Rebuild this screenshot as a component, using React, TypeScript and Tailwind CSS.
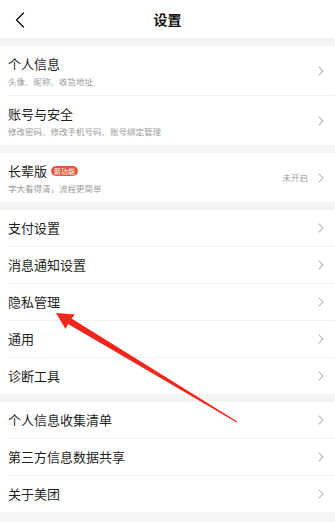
import React from "react";

type Row = { title: string; sub?: string; badge?: string; value?: string };

const groups: Row[][] = [
  [
    { title: "个人信息", sub: "头像、昵称、收货地址" },
    { title: "账号与安全", sub: "修改密码、修改手机号码、账号绑定管理" },
  ],
  [{ title: "长辈版", sub: "字大看得清，流程更简单", badge: "新功能", value: "未开启" }],
  [
    { title: "支付设置" },
    { title: "消息通知设置" },
    { title: "隐私管理" },
    { title: "通用" },
    { title: "诊断工具" },
  ],
  [{ title: "个人信息收集清单" }, { title: "第三方信息数据共享" }, { title: "关于美团" }],
];

function Chevron() {
  return (
    <svg width="6" height="10" viewBox="0 0 6 10" fill="none" className="shrink-0">
      <path d="M1 1l4 4-4 4" stroke="#bdbdbd" strokeWidth="1.1" strokeLinecap="round" strokeLinejoin="round" />
    </svg>
  );
}

function SettingRow({ row }: { row: Row }) {
  return (
    <div className={`flex items-center pl-2 pr-[11px] ${row.sub ? "h-[49px]" : "h-[36px]"}`}>
      <div className="flex-1 flex flex-col">
        <div className="flex items-center gap-1">
          <span className="text-[13px] leading-[18px] text-[#1f1f1f]">{row.title}</span>
          {row.badge && (
            <span className="h-[10px] px-[3px] rounded-full bg-[#e2563b] text-white text-[7px] leading-[10px] flex items-center">
              {row.badge}
            </span>
          )}
        </div>
        {row.sub && <span className="mt-[2px] text-[8.5px] leading-[12px] text-[#9a9a9a]">{row.sub}</span>}
      </div>
      {row.value && <span className="mr-[10px] text-[8.5px] text-[#9a9a9a]">{row.value}</span>}
      <Chevron />
    </div>
  );
}

export default function App() {
  return (
    <div
      className="relative w-[335px] h-[522px] overflow-hidden bg-[#f5f5f5]"
      style={{ fontFamily: '"Noto Sans CJK SC", "Noto Sans", sans-serif' }}
    >
      {/* Header */}
      <div className="relative h-[38px] bg-white flex items-center justify-center">
        <svg width="10" height="16" viewBox="0 0 10 16" fill="none" className="absolute left-[15px] top-[12px]">
          <path d="M8.5 1L1.5 8l7 7" stroke="#111" strokeWidth="1.4" strokeLinecap="round" strokeLinejoin="round" />
        </svg>
        <span className="text-[14px] font-bold text-[#111]">设置</span>
      </div>

      {groups.map((g, gi) => (
        <div key={gi} className="mt-2 bg-white">
          {g.map((row, ri) => (
            <div key={row.title}>
              {ri > 0 && <div className="ml-2 h-px bg-[#eeeeee]" />}
              <SettingRow row={row} />
            </div>
          ))}
        </div>
      ))}

      {/* Annotation arrow */}
      <svg className="absolute left-0 top-0 pointer-events-none" width="335" height="522" viewBox="0 0 335 522">
        <polygon
          points="56,313 75,314.5 71.5,318.5 237.3,421.6 236.7,422.4 68,324 65.5,329"
          fill="#f3261c"
        />
      </svg>
    </div>
  );
}
